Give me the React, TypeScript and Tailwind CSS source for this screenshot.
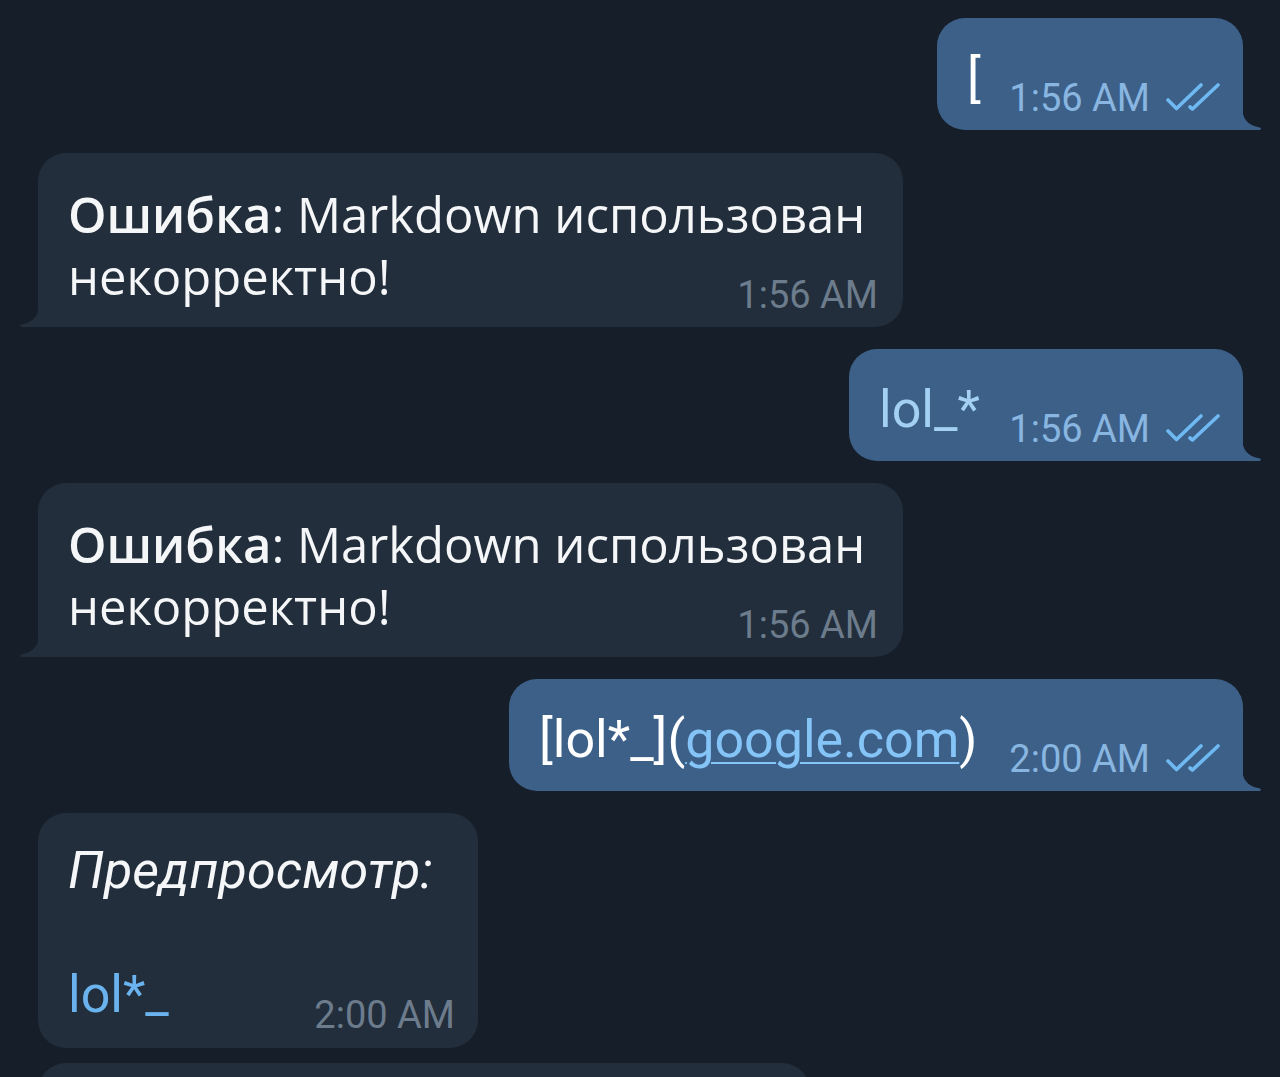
import React from "react";

const OUT = "#3d6089";
const IN = "#222e3b";

function Tail({ side, color }: { side: "left" | "right"; color: string }) {
  return (
    <svg
      width="20"
      height="24"
      viewBox="0 0 20 24"
      className={
        side === "right"
          ? "absolute bottom-0 right-[-19px]"
          : "absolute bottom-0 left-[-19px] -scale-x-100"
      }
    >
      <path
        d="M0 0 C0 12 5 19 17 21.3 Q20 22 18.5 23.5 Q17.8 24 16 24 L0 24 Z"
        fill={color}
      />
    </svg>
  );
}

function Checks() {
  return (
    <svg width="56" height="30" viewBox="0 0 56 30" className="ml-[14px] mb-[9px]" fill="none">
      <path
        d="M4 19 L12.5 27.5 L37 4"
        stroke="#6fb9f2"
        strokeWidth="3.6"
        strokeLinecap="round"
        strokeLinejoin="round"
      />
      <path
        d="M26 26 L28.5 28 L54 4"
        stroke="#6fb9f2"
        strokeWidth="3.6"
        strokeLinecap="round"
        strokeLinejoin="round"
      />
    </svg>
  );
}

function OutTime({ t }: { t: string }) {
  return (
    <span className="ml-auto flex items-end shrink-0">
      <span className="font-['Roboto',sans-serif] text-[38px] leading-[44px] text-[#88b6e0]">{t}</span>
      <Checks />
    </span>
  );
}

function InTime({ t }: { t: string }) {
  return (
    <span className="ml-auto shrink-0 font-['Roboto',sans-serif] text-[38px] leading-[44px] text-[#6c7c8c]">
      {t}
    </span>
  );
}

function ErrorBubble({ mt }: { mt: string }) {
  return (
    <div
      className={`relative ml-[38px] ${mt} w-[865px] rounded-[28px] rounded-bl-none bg-[#222e3b] pt-[30px] pb-[10px] pl-[30px] pr-[25px] text-[#f4f6f8] font-['Open_Sans',sans-serif] text-[49px] leading-[62px]`}
    >
      <div className="whitespace-nowrap">
        <span className="font-semibold">Ошибка</span>: Markdown использован
      </div>
      <div className="flex items-end">
        <span className="mb-[10px] whitespace-nowrap">некорректно!</span>
        <InTime t="1:56 AM" />
      </div>
      <Tail side="left" color={IN} />
    </div>
  );
}

export default function App() {
  return (
    <div className="w-[1280px] h-[1077px] overflow-hidden bg-[#161f29] flex flex-col pt-[18px] font-['Roboto',sans-serif]">
      {/* B1 */}
      <div
        className="relative self-end mr-[37px] w-[306px] rounded-[28px] rounded-br-none pt-[30px] pb-[10px] pl-[30px] pr-[23px] flex items-end"
        style={{ backgroundColor: OUT }}
      >
        <span className="mb-[10px] text-[52px] leading-[62px] text-white">[</span>
        <OutTime t="1:56 AM" />
        <Tail side="right" color={OUT} />
      </div>

      <ErrorBubble mt="mt-[23px]" />

      {/* B3 */}
      <div
        className="relative self-end mr-[37px] mt-[22px] w-[394px] rounded-[28px] rounded-br-none pt-[30px] pb-[10px] pl-[30px] pr-[23px] flex items-end"
        style={{ backgroundColor: OUT }}
      >
        <span className="mb-[10px] text-[52px] leading-[62px] text-[#a3d0f3]">lol_*</span>
        <OutTime t="1:56 AM" />
        <Tail side="right" color={OUT} />
      </div>

      <ErrorBubble mt="mt-[22px]" />

      {/* B5 */}
      <div
        className="relative self-end mr-[37px] mt-[22px] w-[734px] rounded-[28px] rounded-br-none pt-[30px] pb-[10px] pl-[30px] pr-[23px] flex items-end"
        style={{ backgroundColor: OUT }}
      >
        <span className="mb-[10px] text-[52px] leading-[62px] text-white whitespace-nowrap">
          [lol*_](
          <span className="text-[#85c4f7] underline decoration-2 underline-offset-[5px]">google.com</span>)
        </span>
        <OutTime t="2:00 AM" />
        <Tail side="right" color={OUT} />
      </div>

      {/* B6 */}
      <div className="relative ml-[38px] mt-[22px] w-[440px] rounded-[28px] bg-[#222e3b] pt-[27px] pb-[11px] pl-[30px] pr-[23px] text-[52px] leading-[62px] text-[#f4f6f8]">
        <div className="italic">Предпросмотр:</div>
        <div>&nbsp;</div>
        <div className="flex items-end">
          <span className="mb-[11px] text-[#6ab3ee]">lol*_</span>
          <InTime t="2:00 AM" />
        </div>
      </div>

      {/* B7 partial */}
      <div className="ml-[38px] mt-[15px] w-[772px] h-[120px] shrink-0 rounded-[28px] bg-[#222e3b]" />
    </div>
  );
}
